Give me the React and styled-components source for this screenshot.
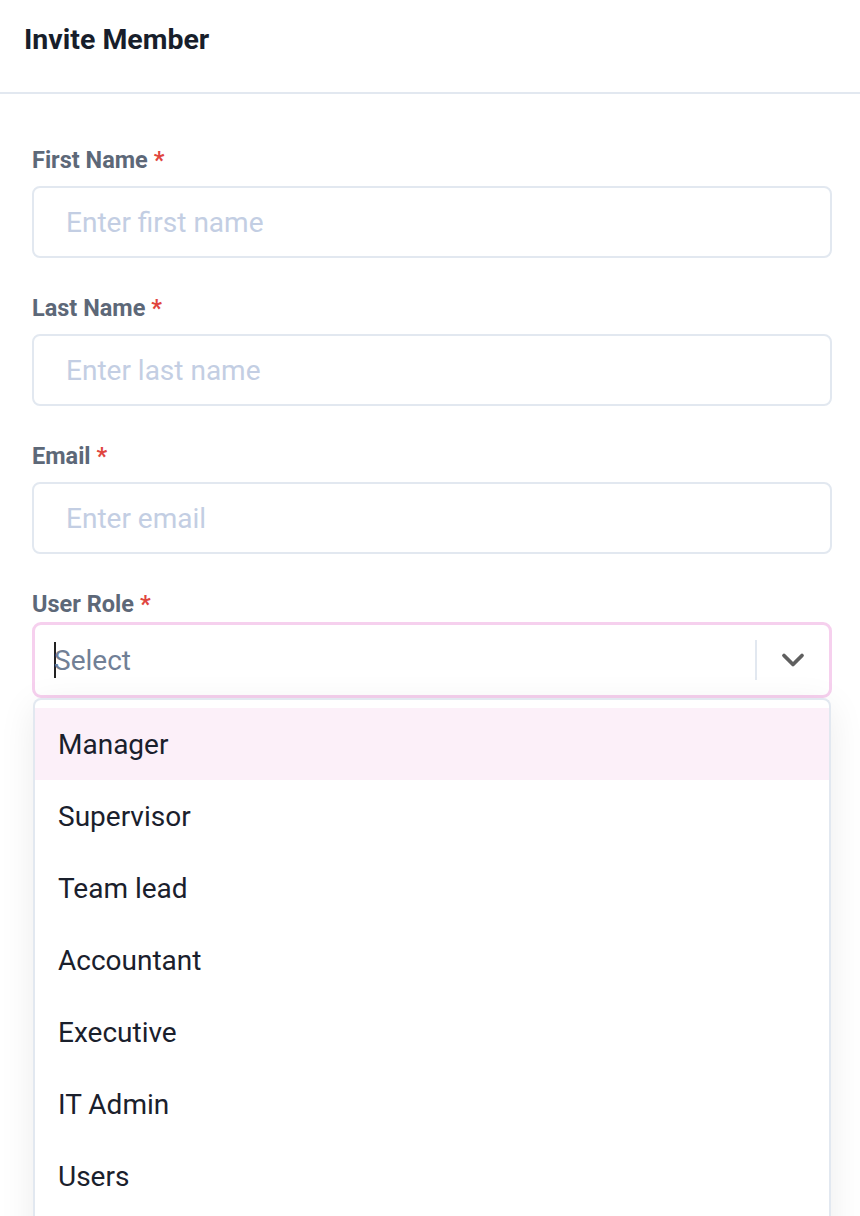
import React from 'react';
import styled, { createGlobalStyle } from 'styled-components';

const GlobalStyle = createGlobalStyle`
  body {
    margin: 0;
    background: #fff;
    font-family: Roboto, "Liberation Sans", sans-serif;
  }
`;

const Page = styled.div`
  width: 860px;
  height: 1216px;
  overflow: hidden;
  background: #fff;
`;

const Header = styled.div`
  height: 94px;
  box-sizing: border-box;
  padding: 24px 24px 0;
  border-bottom: 2px solid #e2e8f0;
`;

const Title = styled.h2`
  margin: 0;
  font-size: 28.5px;
  line-height: 32px;
  font-weight: 700;
  color: #171e2b;
`;

const Form = styled.div`
  padding: 52px 28px 0 32px;
  display: flex;
  flex-direction: column;
`;

const Field = styled.div`
  display: flex;
  flex-direction: column;
  gap: ${p => p.$gap || 12}px;
  margin-bottom: 36px;
`;

const Label = styled.label`
  font-size: 23.5px;
  line-height: 28px;
  font-weight: 700;
  color: #5d6878;
`;

const Required = styled.span`
  color: #e0453e;
  margin-left: 6px;
`;

const Input = styled.input`
  height: 72px;
  box-sizing: border-box;
  border: 2px solid #e2e8f0;
  border-radius: 8px;
  padding: 0 32px;
  font-family: inherit;
  font-size: 28px;
  color: #1a202c;
  outline: none;
  &::placeholder {
    color: #c3cee3;
  }
`;

const SelectBox = styled.div`
  height: 76px;
  box-sizing: border-box;
  border: 3px solid #f6d0ee;
  border-radius: 9px;
  display: flex;
  align-items: center;
  padding-left: 19px;
`;

const Caret = styled.span`
  width: 2px;
  height: 36px;
  margin-right: -2px;
  background: #222;
`;

const SelectValue = styled.span`
  flex: 1;
  font-size: 28px;
  color: #718096;
`;

const Divider = styled.span`
  width: 2px;
  height: 40px;
  background: #e2e8f0;
`;

const Chevron = styled.div`
  width: 72px;
  display: flex;
  justify-content: center;
  align-items: center;
  color: #5f5f5f;
`;

const MenuWrap = styled.div`
  position: relative;
  margin: 0 1px;
`;

const Menu = styled.ul`
  list-style: none;
  margin: 0;
  padding: 8px 0 0;
  border: 2px solid #e2e8f0;
  border-bottom: none;
  border-radius: 8px 8px 0 0;
  box-shadow: 0 8px 36px rgba(0, 0, 0, 0.08);
  background: #fff;
  height: 600px;
`;

const Option = styled.li`
  height: 72px;
  display: flex;
  align-items: center;
  padding-left: 23px;
  font-size: 28px;
  color: #1a202c;
  background: ${p => (p.$active ? '#fcf0f9' : 'transparent')};
`;

const roles = ['Manager', 'Supervisor', 'Team lead', 'Accountant', 'Executive', 'IT Admin', 'Users'];

export default function App() {
  return (
    <Page>
      <GlobalStyle />
      <Header>
        <Title>Invite Member</Title>
      </Header>
      <Form>
        <Field>
          <Label>First Name<Required>*</Required></Label>
          <Input placeholder="Enter first name" />
        </Field>
        <Field>
          <Label>Last Name<Required>*</Required></Label>
          <Input placeholder="Enter last name" />
        </Field>
        <Field>
          <Label>Email<Required>*</Required></Label>
          <Input placeholder="Enter email" />
        </Field>
        <Field $gap={4}>
          <Label>User Role<Required>*</Required></Label>
          <div>
            <SelectBox>
              <Caret />
              <SelectValue>Select</SelectValue>
              <Divider />
              <Chevron>
                <svg width="36" height="36" viewBox="0 0 24 24" fill="none" stroke="currentColor" strokeWidth="2.5" strokeLinecap="round" strokeLinejoin="round">
                  <polyline points="6 9 12 15 18 9" />
                </svg>
              </Chevron>
            </SelectBox>
            <MenuWrap>
              <Menu>
                {roles.map((r, i) => (
                  <Option key={r} $active={i === 0}>{r}</Option>
                ))}
              </Menu>
            </MenuWrap>
          </div>
        </Field>
      </Form>
    </Page>
  );
}
